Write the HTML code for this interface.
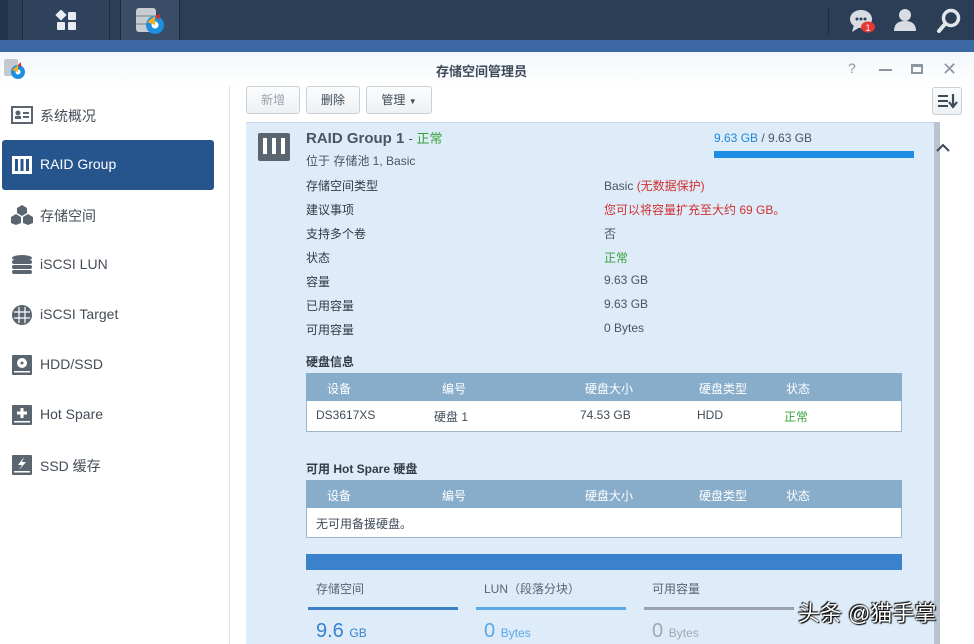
<!DOCTYPE html>
<html><head><meta charset="utf-8"><style>
*{margin:0;padding:0;box-sizing:border-box}
body{width:974px;height:644px;overflow:hidden;background:#fff;font-family:"Liberation Sans","Noto Sans CJK SC",sans-serif;font-size:12px;color:#404c58;position:relative}
.a{position:absolute;white-space:nowrap}
.top{left:0;top:0;width:974px;height:40px;background:#2c3e55}
.strip{left:0;top:40px;width:974px;height:12px;background:#3c69a3}
.tb{left:0;top:52px;width:974px;height:34px;background:linear-gradient(#f3f7fb,#fff)}
.side-item{left:0;width:228px;height:50px;font-size:14px;color:#444d57}
.side-item .ic{position:absolute;left:11px;top:15px;width:22px;height:20px}
.side-item span{position:absolute;left:40px;top:16px}
.btn{top:86px;height:28px;border:1px solid #c8d0d8;border-radius:3px;background:linear-gradient(#fbfcfd,#eef1f4);font-size:12px;text-align:center;line-height:26px;color:#404c58}
.panel{left:246px;top:122px;width:688px;height:522px;background:#deebf9;border-top:1px solid #c6d6e8}
.lab{left:306px;font-size:12px;color:#333c46}
.val{left:604px;font-size:12px;color:#4a5560}
.th{background:#88adcb;color:#fff;height:28px}
</style></head><body>
<div class="a top"></div>
<div class="a" style="left:0;top:0;width:8px;height:40px;background:#24344a"></div>
<div class="a" style="left:22px;top:0;width:88px;height:40px;background:#2f435c;border-left:1px solid #1d2b3c;border-right:1px solid #1d2b3c"></div>
<svg class="a" style="left:55px;top:10px" width="24" height="22"><rect x="2" y="1" width="8" height="8" transform="rotate(45 6 5)" fill="#e8ecf0"/><rect x="13" y="2" width="8" height="8" rx="1" fill="#e8ecf0"/><rect x="2" y="12" width="8" height="8" rx="1" fill="#e8ecf0"/><rect x="13" y="12" width="8" height="8" rx="1" fill="#e8ecf0"/></svg>
<div class="a" style="left:120px;top:0;width:60px;height:40px;background:#3a4d66;border-left:1px solid #1d2b3c;border-right:1px solid #1d2b3c"></div>
<svg class="a" style="left:134px;top:6px" width="34" height="30"><rect x="2" y="2" width="20" height="24" rx="3" fill="#c8ccd2"/><rect x="2" y="9" width="20" height="2" fill="#9aa"/><rect x="2" y="17" width="20" height="2" fill="#9aa"/><circle cx="21" cy="19" r="9" fill="#1e8fe0"/><circle cx="21" cy="19" r="3.5" fill="#fff"/><path d="M21 10 L21 19 L13 16 Z" fill="#f2b01e"/><path d="M21 10 L26 8 L25 14 Z" fill="#e02a2a"/></svg>
<div class="a" style="left:828px;top:8px;width:1px;height:26px;background:#1d2b3c"></div>
<svg class="a" style="left:848px;top:8px" width="30" height="26"><ellipse cx="13" cy="11" rx="11" ry="9" fill="#d8dde3"/><path d="M6 17 L4 24 L12 19Z" fill="#d8dde3"/><circle cx="9" cy="11" r="1.5" fill="#2c3e55"/><circle cx="13" cy="11" r="1.5" fill="#2c3e55"/><circle cx="17" cy="11" r="1.5" fill="#2c3e55"/><ellipse cx="20" cy="19" rx="7" ry="5.5" fill="#e53935"/><text x="17.5" y="23" font-size="9" fill="#fff" font-family="Liberation Sans">1</text></svg>
<svg class="a" style="left:893px;top:8px" width="24" height="24"><circle cx="12" cy="7" r="6" fill="#d8dde3"/><path d="M1 23 Q1 13 12 13 Q23 13 23 23Z" fill="#d8dde3"/></svg>
<svg class="a" style="left:936px;top:8px" width="26" height="26"><circle cx="15" cy="10" r="7.5" fill="none" stroke="#e3e7eb" stroke-width="3.5"/><path d="M9 16 L3 23" stroke="#e3e7eb" stroke-width="4" stroke-linecap="round"/></svg>
<div class="a strip"></div>
<div class="a tb"></div>
<svg class="a" style="left:3px;top:58px" width="24" height="22"><rect x="1" y="1" width="14" height="17" rx="2" fill="#c4c9d0"/><circle cx="15" cy="14" r="7" fill="#1e8fe0"/><circle cx="15" cy="14" r="2.5" fill="#fff"/><path d="M15 7 L15 14 L9 12Z" fill="#f2b01e"/><path d="M15 7 L18 4 L18 10Z" fill="#e02a2a"/></svg>
<div class="a" style="left:436px;top:61px;font-size:13px;font-weight:bold;color:#3d4a5a">存储空间管理员</div>
<div class="a" style="left:848px;top:60px;font-size:14px;color:#8b96a2">?</div>
<div class="a" style="left:879px;top:69px;width:13px;height:2px;background:#8b96a2"></div>
<div class="a" style="left:911px;top:64px;width:12px;height:10px;border:2px solid #8b96a2;border-top-width:3px"></div>
<div class="a" style="left:942px;top:59px;font-size:18px;color:#8b96a2">✕</div>
<div class="a" style="left:229px;top:86px;width:1px;height:558px;background:#dde2e8"></div>

<div class="a side-item" style="top:90px"><svg class="ic" viewBox="0 0 22 20"><rect x="1" y="2" width="20" height="16" fill="none" stroke="#5b6570" stroke-width="2"/><circle cx="7" cy="8" r="2.5" fill="#5b6570"/><rect x="4" y="11" width="6" height="3" fill="#5b6570"/><rect x="12" y="7" width="6" height="2" fill="#5b6570"/><rect x="12" y="11" width="6" height="2" fill="#5b6570"/></svg><span>系统概况</span></div>
<div class="a" style="left:2px;top:140px;width:212px;height:50px;background:#26558d;border-radius:3px"></div>
<div class="a side-item" style="top:140px;color:#fff"><svg class="ic" viewBox="0 0 22 20"><rect x="1" y="1" width="20" height="18" fill="#fff"/><rect x="4" y="4" width="3" height="12" fill="#26558d"/><rect x="9.5" y="4" width="3" height="12" fill="#26558d"/><rect x="15" y="4" width="3" height="12" fill="#26558d"/></svg><span style="color:#fff">RAID Group</span></div>
<div class="a side-item" style="top:190px"><svg class="ic" viewBox="0 0 22 20"><path d="M11 0 L16 3 L16 8 L11 11 L6 8 L6 3Z M5 9 L10 12 L10 18 L5 20 L0 18 L0 12Z M17 9 L22 12 L22 18 L17 20 L12 18 L12 12Z" fill="#5b6570"/></svg><span>存储空间</span></div>
<div class="a side-item" style="top:240px"><svg class="ic" viewBox="0 0 22 20"><ellipse cx="11" cy="3" rx="10" ry="3" fill="#5b6570"/><rect x="1" y="5" width="20" height="4" rx="2" fill="#5b6570"/><rect x="1" y="10" width="20" height="4" rx="2" fill="#5b6570"/><rect x="1" y="15" width="20" height="4" rx="2" fill="#5b6570"/></svg><span>iSCSI LUN</span></div>
<div class="a side-item" style="top:290px"><svg class="ic" viewBox="0 0 22 20"><circle cx="11" cy="10" r="10" fill="#5b6570"/><path d="M3 7H19M3 13H19M8 2V18M14 2V18" stroke="#fff" stroke-width="1.2"/></svg><span>iSCSI Target</span></div>
<div class="a side-item" style="top:340px"><svg class="ic" viewBox="0 0 22 20"><rect x="1" y="0" width="20" height="20" rx="1" fill="#5b6570"/><circle cx="11" cy="8" r="5" fill="#fff"/><circle cx="11" cy="8" r="1.5" fill="#5b6570"/><rect x="3" y="16" width="16" height="1.5" fill="#fff"/></svg><span>HDD/SSD</span></div>
<div class="a side-item" style="top:390px"><svg class="ic" viewBox="0 0 22 20"><rect x="1" y="0" width="20" height="20" rx="1" fill="#5b6570"/><path d="M11 3V13M6 8H16" stroke="#fff" stroke-width="3"/><rect x="3" y="16" width="16" height="1.5" fill="#fff"/></svg><span>Hot Spare</span></div>
<div class="a side-item" style="top:440px"><svg class="ic" viewBox="0 0 22 20"><rect x="1" y="0" width="20" height="20" rx="1" fill="#5b6570"/><path d="M13 2 L7 10 L11 10 L8 15 L15 7 L11 7Z" fill="#fff"/><rect x="3" y="16" width="16" height="1.5" fill="#fff"/></svg><span>SSD 缓存</span></div>

<div class="a btn" style="left:246px;width:54px;color:#9aa3ad">新增</div>
<div class="a btn" style="left:306px;width:54px">删除</div>
<div class="a btn" style="left:366px;width:66px">管理 <span style="font-size:8px">▼</span></div>
<div class="a btn" style="left:932px;width:30px;top:87px"></div>
<svg class="a" style="left:938px;top:93px" width="20" height="16"><rect x="0" y="2" width="10" height="2" fill="#3d4a5a"/><rect x="0" y="7" width="10" height="2" fill="#3d4a5a"/><rect x="0" y="12" width="10" height="2" fill="#3d4a5a"/><path d="M15 1V13M11 9L15 14L19 9" stroke="#3d4a5a" stroke-width="2.2" fill="none"/></svg>

<div class="a panel"></div>
<div class="a" style="left:934px;top:122px;width:6px;height:522px;background:#b9c4d0"></div>
<svg class="a" style="left:258px;top:133px" width="32" height="28"><rect x="0" y="0" width="32" height="28" rx="2" fill="#5b6570"/><rect x="5" y="5" width="4" height="16" fill="#fff"/><rect x="14" y="5" width="4" height="16" fill="#fff"/><rect x="23" y="5" width="4" height="16" fill="#fff"/></svg>
<div class="a" style="left:306px;top:128px;font-size:15px;font-weight:bold;color:#4a5563">RAID Group 1 <span style="font-weight:normal;font-size:13px">- <span style="color:#3aa23a">正常</span></span></div>
<div class="a" style="left:306px;top:152px;font-size:12px;color:#4a5563">位于 存储池 1, Basic</div>
<div class="a" style="left:714px;top:131px;font-size:12px;color:#4a5563"><span style="color:#1e88d8">9.63 GB</span> / 9.63 GB</div>
<div class="a" style="left:714px;top:151px;width:200px;height:7px;background:#1e8de6"></div>
<svg class="a" style="left:936px;top:143px" width="14" height="10"><path d="M1 8L7 2L13 8" stroke="#3d4a5a" stroke-width="2" fill="none"/></svg>

<div class="a lab" style="top:177px">存储空间类型</div><div class="a val" style="top:177px">Basic <span style="color:#d03030">(无数据保护)</span></div>
<div class="a lab" style="top:201px">建议事项</div><div class="a val" style="top:201px;color:#d03030">您可以将容量扩充至大约 69 GB。</div>
<div class="a lab" style="top:225px">支持多个卷</div><div class="a val" style="top:225px">否</div>
<div class="a lab" style="top:249px">状态</div><div class="a val" style="top:249px;color:#3aa23a">正常</div>
<div class="a lab" style="top:273px">容量</div><div class="a val" style="top:273px">9.63 GB</div>
<div class="a lab" style="top:297px">已用容量</div><div class="a val" style="top:297px">9.63 GB</div>
<div class="a lab" style="top:321px">可用容量</div><div class="a val" style="top:321px">0 Bytes</div>
<div class="a lab" style="top:353px;font-weight:bold">硬盘信息</div>

<div class="a" style="left:306px;top:373px;width:596px;height:59px;background:#fff;border:1px solid #9eb6cc"></div>
<div class="a th" style="left:306px;top:373px;width:596px"></div>
<div class="a" style="left:327px;top:380px;color:#fff">设备</div><div class="a" style="left:442px;top:380px;color:#fff">编号</div><div class="a" style="left:585px;top:380px;color:#fff">硬盘大小</div><div class="a" style="left:699px;top:380px;color:#fff">硬盘类型</div><div class="a" style="left:786px;top:380px;color:#fff">状态</div>
<div class="a" style="left:316px;top:408px">DS3617XS</div><div class="a" style="left:434px;top:408px">硬盘 1</div><div class="a" style="left:580px;top:408px">74.53 GB</div><div class="a" style="left:697px;top:408px">HDD</div><div class="a" style="left:784px;top:408px;color:#3aa23a">正常</div>

<div class="a lab" style="top:460px;font-weight:bold">可用 Hot Spare 硬盘</div>
<div class="a" style="left:306px;top:480px;width:596px;height:58px;background:#fff;border:1px solid #9eb6cc"></div>
<div class="a th" style="left:306px;top:480px;width:596px"></div>
<div class="a" style="left:327px;top:487px;color:#fff">设备</div><div class="a" style="left:442px;top:487px;color:#fff">编号</div><div class="a" style="left:585px;top:487px;color:#fff">硬盘大小</div><div class="a" style="left:699px;top:487px;color:#fff">硬盘类型</div><div class="a" style="left:786px;top:487px;color:#fff">状态</div>
<div class="a" style="left:316px;top:515px">无可用备援硬盘。</div>

<div class="a" style="left:306px;top:554px;width:596px;height:16px;background:#3a82cc"></div>
<div class="a" style="left:316px;top:580px;color:#5a6570">存储空间</div>
<div class="a" style="left:484px;top:580px;color:#5a6570">LUN（段落分块）</div>
<div class="a" style="left:652px;top:580px;color:#5a6570">可用容量</div>
<div class="a" style="left:308px;top:607px;width:150px;height:3px;background:#3b7fc4"></div>
<div class="a" style="left:476px;top:607px;width:150px;height:3px;background:#5aa8e6"></div>
<div class="a" style="left:644px;top:607px;width:150px;height:3px;background:#9aa3ad"></div>
<div class="a" style="left:316px;top:620px;font-size:20px;color:#3a82cc">9.6 <span style="font-size:12px">GB</span></div>
<div class="a" style="left:484px;top:620px;font-size:20px;color:#5aa8e6">0 <span style="font-size:12px">Bytes</span></div>
<div class="a" style="left:652px;top:620px;font-size:20px;color:#a0a8b0">0 <span style="font-size:12px">Bytes</span></div>
<div class="a" style="left:798px;top:596px;font-size:22px;color:#fff;text-shadow:0 0 2px #000,1px 1px 1px #000,-1px -1px 1px #000">头条 @猫手掌</div>
</body></html>
